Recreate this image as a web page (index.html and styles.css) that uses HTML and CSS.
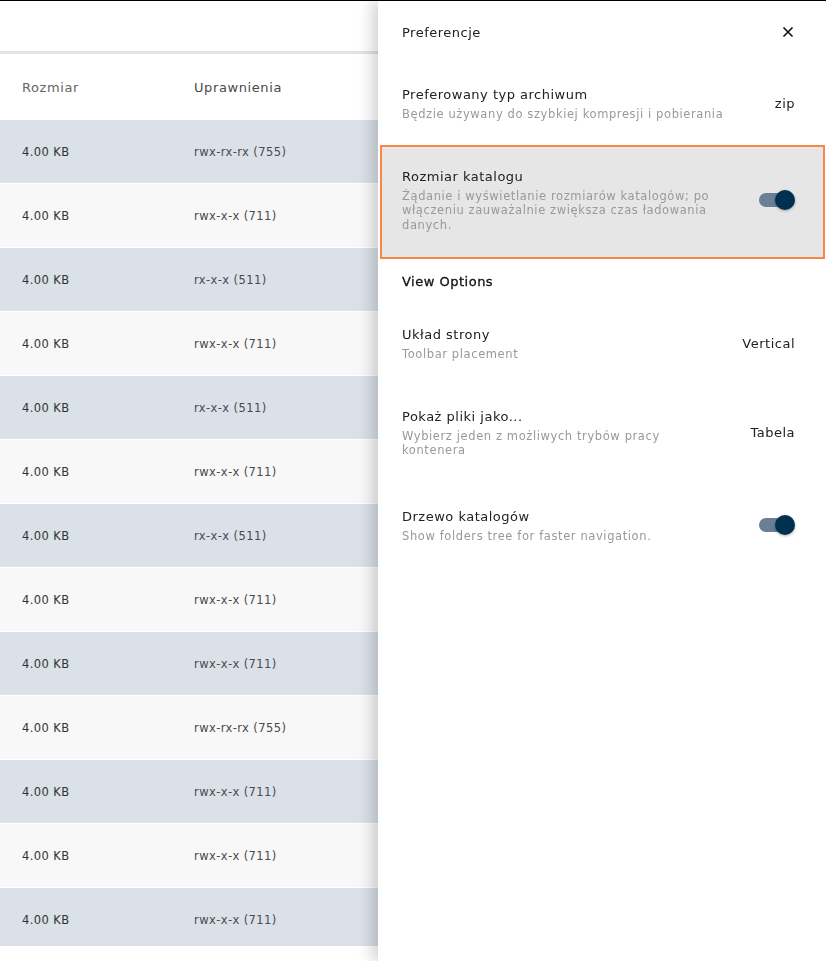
FILE: index.html
```html
<!DOCTYPE html>
<html lang="pl">
<head>
    <meta charset="UTF-8">
    <meta name="viewport" content="width=device-width, initial-scale=1.0">
    <title>Preferencje</title>
    <link rel="stylesheet" href="styles.css">
</head>
<body>
    <div class="main">
        <div class="toolbar"></div>
        <div class="files">
            <div class="files-head">
                <div class="col col-size">Rozmiar</div>
                <div class="col col-perm">Uprawnienia</div>
            </div>
            <div class="files-body" id="files-body">
                <!-- rows added by script -->
            </div>
        </div>
    </div>

    <aside class="drawer">
        <div class="drawer-head">
            <span>Preferencje</span>
            <svg class="close" width="12" height="12" viewBox="0 0 12 12">
                <path d="M1.5 1.5 L10.5 10.5 M10.5 1.5 L1.5 10.5" stroke="#111" stroke-width="1.6" fill="none"/>
            </svg>
        </div>

        <div class="pref">
            <div class="pref-text">
                <div class="pref-title">Preferowany typ archiwum</div>
                <div class="pref-desc">Będzie używany do szybkiej kompresji i pobierania</div>
            </div>
            <div class="pref-value">zip</div>
        </div>

        <div class="pref pref-tall active">
            <div class="pref-text">
                <div class="pref-title">Rozmiar katalogu</div>
                <div class="pref-desc">Żądanie i wyświetlanie rozmiarów katalogów; po włączeniu zauważalnie zwiększa czas ładowania danych.</div>
            </div>
            <div class="switch"><span class="knob"></span></div>
        </div>

        <div class="subheader">View Options</div>

        <div class="pref">
            <div class="pref-text">
                <div class="pref-title">Układ strony</div>
                <div class="pref-desc">Toolbar placement</div>
            </div>
            <div class="pref-value">Vertical</div>
        </div>

        <div class="pref pref-tall">
            <div class="pref-text">
                <div class="pref-title">Pokaż pliki jako...</div>
                <div class="pref-desc">Wybierz jeden z możliwych trybów pracy kontenera</div>
            </div>
            <div class="pref-value">Tabela</div>
        </div>

        <div class="pref">
            <div class="pref-text">
                <div class="pref-title">Drzewo katalogów</div>
                <div class="pref-desc">Show folders tree for faster navigation.</div>
            </div>
            <div class="switch"><span class="knob"></span></div>
        </div>
    </aside>

    <script>
        // Permissions of the listed folders
        const perms = [
            'rwx-rx-rx (755)', 'rwx-x-x (711)', 'rx-x-x (511)', 'rwx-x-x (711)',
            'rx-x-x (511)', 'rwx-x-x (711)', 'rx-x-x (511)', 'rwx-x-x (711)',
            'rwx-x-x (711)', 'rwx-rx-rx (755)', 'rwx-x-x (711)', 'rwx-x-x (711)',
            'rwx-x-x (711)'
        ];

        const body = document.getElementById('files-body');
        perms.forEach(perm => {
            const row = document.createElement('div');
            row.className = 'row';
            row.innerHTML = `
                <div class="col col-size">4.00 KB</div>
                <div class="col col-perm">${perm}</div>
            `;
            body.appendChild(row);
        });
    </script>
</body>
</html>
```

FILE: styles.css
```css
* {
    margin: 0;
    padding: 0;
    box-sizing: border-box;
}

body {
    font-family: "DejaVu Sans", sans-serif;
    color: #212121;
    background: #fff;
    border-top: 1px solid #000;
    height: 961px;
    overflow: hidden;
}

.toolbar {
    height: 53px;
    border-bottom: 3px solid #e3e3e3;
}

.files-head {
    display: flex;
    align-items: center;
    height: 66px;
    color: #666;
    font-size: 13px;
    letter-spacing: 0.6px;
}

.files-body {
    height: 826px;
    overflow: hidden;
}

.row {
    display: flex;
    align-items: center;
    height: 64px;
    border-bottom: 1px solid #fff;
    font-size: 11.5px;
    letter-spacing: 0.4px;
    color: #333;
    background: #f8f8f8;
}

.row:nth-child(odd) {
    background: #dbe1e8;
}

.col-size {
    width: 194px;
    padding-left: 22px;
}

.col-perm {
    color: #4a4a4a;
}

/* settings drawer */
.drawer {
    position: fixed;
    top: 1px;
    right: 0;
    bottom: 0;
    width: 448px;
    background: #fff;
    box-shadow: -6px 0 14px rgba(0, 0, 0, 0.18);
}

.drawer-head {
    display: flex;
    justify-content: space-between;
    align-items: center;
    height: 62px;
    padding: 0 32px 0 24px;
    font-size: 13px;
    letter-spacing: 0.5px;
}

.close {
    display: block;
}

.pref {
    display: flex;
    align-items: center;
    margin: 0 1px 0 2px;
    padding: 21px 28px 21px 20px;
    border: 2px solid transparent;
}

.pref-tall {
    padding-bottom: 25px;
}

.pref.active {
    background: #e6e6e6;
    border-color: #fb8446;
}

.pref-text {
    width: 323px;
    margin-right: auto;
}

.pref-title {
    font-size: 13px;
    line-height: 18px;
    letter-spacing: 0.5px;
    margin-bottom: 3px;
}

.pref-desc {
    font-size: 11.5px;
    line-height: 14.5px;
    letter-spacing: 0.6px;
    color: #999;
}

.pref-value {
    font-size: 13px;
    letter-spacing: 0.5px;
}

.subheader {
    display: flex;
    align-items: center;
    height: 44px;
    padding-left: 24px;
    font-size: 13px;
    letter-spacing: 0.5px;
    color: #111;
    -webkit-text-stroke: 0.3px #111;
}

.switch {
    position: relative;
    width: 34px;
    height: 14px;
    margin-right: 2px;
    border-radius: 7px;
    background: #6a7f94;
}

.knob {
    position: absolute;
    top: -3px;
    right: -2px;
    width: 20px;
    height: 20px;
    border-radius: 50%;
    background: #00304f;
    box-shadow: 0 1px 3px rgba(0, 0, 0, 0.3);
}
```
